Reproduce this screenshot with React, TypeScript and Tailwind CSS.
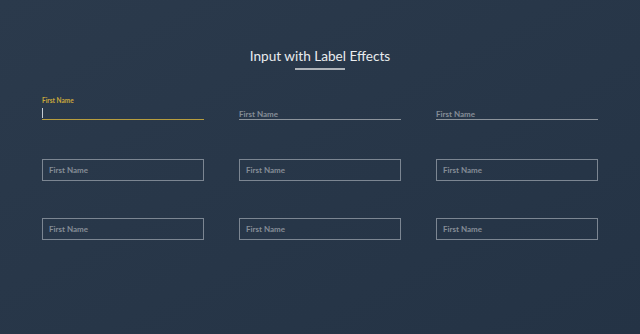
import React from "react";

const font = { fontFamily: "Lato, 'Open Sans', sans-serif" };

function LineInput({ focused }: { focused?: boolean }) {
  return (
    <div className="relative h-[22px]">
      {focused ? (
        <>
          <span className="absolute left-0 top-[-1px] text-[6.5px] font-bold leading-none text-[#c9a83c]">
            First Name
          </span>
          <span className="absolute left-0 top-[9px] h-[10px] w-px bg-[#c5ccd4]" />
        </>
      ) : (
        <span className="absolute left-0 top-[11px] text-[8px] font-bold leading-none text-[#858d97]">
          First Name
        </span>
      )}
      <div
        className={
          "absolute bottom-[1px] left-0 right-0 h-px " +
          (focused ? "bg-[#b79d3e]" : "bg-[#8d949c]")
        }
      />
    </div>
  );
}

function BoxInput() {
  return (
    <div className="flex h-[22px] items-center border border-[#7c8692] px-[6px]">
      <span className="text-[8px] font-bold leading-none text-[#858d97]">First Name</span>
    </div>
  );
}

export default function App() {
  return (
    <div
      className="h-[334px] w-[640px] overflow-hidden bg-gradient-to-br from-[#2b3a4c] to-[#243345]"
      style={font}
    >
      <div className="flex flex-col items-center pt-[47px]">
        <h1 className="text-[13.6px] leading-[18px] text-[#e9ecef]">
          Input with Label Effects
        </h1>
        <div className="mt-[3px] h-[2px] w-[50px] bg-[#aeb3b9]" />
      </div>

      <div className="mx-auto mt-[29px] w-[556px]">
        <div className="grid grid-cols-3 gap-[35px]">
          <LineInput focused />
          <LineInput />
          <LineInput />
        </div>
        <div className="mt-[38px] grid grid-cols-3 gap-[35px]">
          <BoxInput />
          <BoxInput />
          <BoxInput />
        </div>
        <div className="mt-[37px] grid grid-cols-3 gap-[35px]">
          <BoxInput />
          <BoxInput />
          <BoxInput />
        </div>
      </div>
    </div>
  );
}
